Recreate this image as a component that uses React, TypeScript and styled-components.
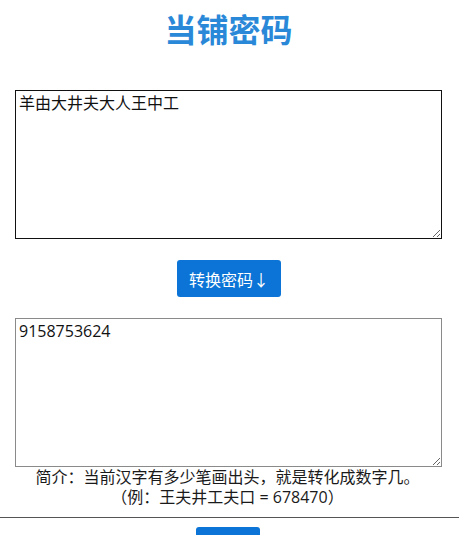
import React, { useState } from "react";
import styled, { createGlobalStyle } from "styled-components";

const Global = createGlobalStyle`
  html, body { margin: 0; padding: 0; background: #fff; }
  body { font-family: "Open Sans", "Noto Sans CJK SC", sans-serif; color: #222; }
`;

const Page = styled.div`
  display: flex;
  flex-direction: column;
  align-items: stretch;
`;

const Title = styled.h1`
  margin: 5px 0 0;
  height: 49px;
  font-family: "Noto Sans CJK SC", sans-serif;
  font-size: 32px;
  line-height: 46px;
  font-weight: 700;
  color: #2a88d8;
  text-align: center;
  padding-right: 2px;
`;

const Area = styled.textarea<{ $focused?: boolean }>`
  box-sizing: border-box;
  display: block;
  width: 427px;
  height: 149px;
  margin: 0 0 0 15px;
  padding: 2px 3px;
  font-family: "Open Sans", "Noto Sans CJK SC", sans-serif;
  font-size: 16px;
  line-height: 20px;
  color: #111;
  border: 1px solid ${(p) => (p.$focused ? "#111" : "#8a8a8a")};
  outline: none;
  resize: vertical;
  background: #fff;
`;

const Top = styled.div`
  margin-top: 36px;
`;

const ButtonRow = styled.div`
  display: flex;
  justify-content: center;
  padding: 21px 0 21px;
  margin-left: -1px;
`;

const Button = styled.button`
  width: 104px;
  height: 37px;
  border: none;
  border-radius: 3px;
  background: #0b74d6;
  color: #fff;
  font-family: "Noto Sans CJK SC", sans-serif;
  font-size: 16px;
  padding: 0;
  cursor: pointer;
`;

const Intro = styled.div`
  margin-top: 0;
  text-align: center;
  font-family: "Open Sans", "Noto Sans CJK SC", sans-serif;
  font-size: 16px;
  line-height: 20px;
  color: #1a1a1a;
  margin-left: -4px;
`;

const Rule = styled.hr`
  margin: 10px 0 0;
  border: none;
  border-top: 1px solid #555;
  height: 0;
`;

const BottomRow = styled.div`
  display: flex;
  justify-content: center;
  padding-top: 9px;
  margin-left: -3px;
`;

const SmallButton = styled.div`
  width: 64px;
  height: 20px;
  background: #0b74d6;
  border-radius: 3px 3px 0 0;
`;

export default function App() {
  const [input, setInput] = useState("羊由大井夫大人王中工");
  const [output, setOutput] = useState("9158753624");
  return (
    <Page>
      <Global />
      <Title>当铺密码</Title>
      <Top>
        <Area $focused value={input} onChange={(e) => setInput(e.target.value)} />
      </Top>
      <ButtonRow>
        <Button>转换密码↓</Button>
      </ButtonRow>
      <Area value={output} onChange={(e) => setOutput(e.target.value)} />
      <Intro>
        简介：当前汉字有多少笔画出头，就是转化成数字几。
        <br />（例：王夫井工夫口 = 678470）
      </Intro>
      <Rule />
      <BottomRow>
        <SmallButton />
      </BottomRow>
    </Page>
  );
}
